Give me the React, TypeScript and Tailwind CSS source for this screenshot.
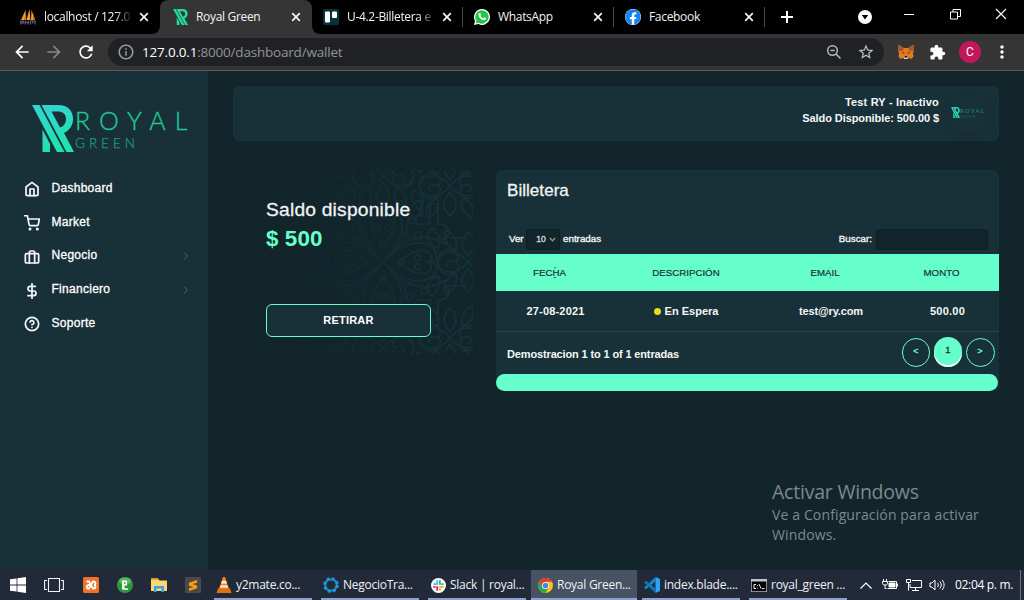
import type { ReactNode } from "react";
import { FiHome, FiShoppingCart, FiBriefcase, FiDollarSign, FiHelpCircle, FiChevronRight } from "react-icons/fi";
import { MdArrowBack, MdArrowForward, MdRefresh, MdInfoOutline, MdExtension, MdMoreVert, MdStarOutline } from "react-icons/md";
import { FaFacebook } from "react-icons/fa";

/* ---------- brand ---------- */

function BrandMark({ className, flat = false }: { className: string; flat?: boolean }) {
  const id = flat ? "markFlat" : "markGrad";
  return (
    <svg viewBox="0 0 42 47" className={className} fill={`url(#${id})`} preserveAspectRatio="none">
      <defs>
        <linearGradient id={id} x1="0" y1="0" x2="0.2" y2="1">
          <stop offset="0" stopColor={flat ? "#1fdf9c" : "#36d3d3"} />
          <stop offset="1" stopColor={flat ? "#1fdf9c" : "#1fe3ac"} />
        </linearGradient>
      </defs>
      <path d="M0 0h7.500L32.500 47h-7.500z" />
      <path d="M10.500 24.500L18 39v8h-7.500z" />
      <path
        d="M9.500 0H26c10 0 15 6 15 14 0 6-3 11-9 14l10 19h-7.500z M19.500 6.500l8.500 16c4-1 6-5 6-8.500 0-5-3-7.500-8.500-7.500z"
        fillRule="evenodd"
      />
    </svg>
  );
}

function Wordmark({ className }: { className: string }) {
  return (
    <span className={`flex flex-col font-['Lato','Liberation_Sans',sans-serif] font-light ${className}`}>
      <span className="text-[25px] leading-[30px] tracking-[9px] text-[#22c993] [-webkit-text-stroke:0.300px_#22c993]">ROYAL</span>
      <span className="text-[13.500px] leading-[17px] tracking-[4px] text-[#209c7c] [-webkit-text-stroke:0.250px_#209c7c]">GREEN</span>
    </span>
  );
}

/* ---------- browser ---------- */

const Close = () => (
  <svg viewBox="0 0 10 10" className="size-[10px] shrink-0" stroke="#f4f4f4" strokeWidth="1.7">
    <path d="M1.200 1.200l7.600 7.600M8.800 1.200L1.200 8.800" />
  </svg>
);

function TabBody({ icon, title, fade = false }: { icon: ReactNode; title: string; fade?: boolean }) {
  return (
    <>
      <span className="flex size-4 shrink-0 items-center justify-center">{icon}</span>
      <span
        className={`ml-2 w-[87px] shrink-0 text-[12px] leading-4 tracking-[-0.320px] whitespace-nowrap text-[#f3f3f3] ${
          fade ? "[mask-image:linear-gradient(to_right,#000_82%,transparent_102%)]" : ""
        }`}
      >
        {title}
      </span>
      <span className="ml-2 flex shrink-0">
        <Close />
      </span>
    </>
  );
}

const PmaIcon = () => (
  <svg viewBox="0 0 16 16" className="size-4">
    <path d="M5.500 1L1 11h5zM9.500 0L6.500 11h4zM11.500 1l3.500 10h-4z" fill="#f29a2e" />
    <path d="M6 4L4 11h2.500zM13 4l2 7h-2z" fill="#c66f14" />
    <path d="M.8 15.500V12h2.500v2H.8M5.200 15.500v-4M8.300 15.500v-4M5.200 13.500h3M10.500 15.500V12H15v3.500M12.700 12v2.500" fill="none" stroke="#62658a" strokeWidth="1.200" />
  </svg>
);

const TrelloIcon = () => (
  <svg viewBox="0 0 16 16" className="size-4">
    <rect width="16" height="16" rx="1.500" fill="#06303a" />
    <rect x="2" y="2.500" width="5" height="11" rx="1" fill="#fff" />
    <rect x="9" y="2.500" width="5" height="6.500" rx="1" fill="#fff" />
  </svg>
);

const WhatsIcon = () => (
  <svg viewBox="0 0 16 16" className="size-4">
    <path d="M8 0a8 8 0 11-3.700 15.100L0 16l1-4.100A8 8 0 018 0z" fill="#fff" />
    <path d="M8 1.200a6.700 6.700 0 11-3.400 12.500L1.800 14.400l.7-2.700A6.700 6.700 0 018 1.200z" fill="#1fc648" />
    <path d="M5.300 4.200c.8-.6 1.200 0 1.700 1.400.1.500-.5.800-.6 1.100.7 1.300 1.500 2 2.800 2.500.5-.2.700-1 1.100-.9 1.900.8 1.900.9 1.600 1.700-.5 1.200-1.900 1.300-3.100.9C6.500 10.100 5.200 8.700 4.600 7c-.4-1.100 0-2.200.7-2.800z" fill="#fff" />
  </svg>
);

function TabStrip() {
  return (
    <div className="flex h-[34px] shrink-0 bg-black">
      <div className="ml-2 flex w-[152px] items-center pl-3">
        <TabBody icon={<PmaIcon />} title="localhost / 127.0" fade />
      </div>
      <div className="relative flex w-[152px] items-center rounded-t-[8px] bg-[#353535] pl-3">
        <svg viewBox="0 0 8 8" className="absolute bottom-0 -left-2 size-2" fill="#353535">
          <path d="M8 0v8H0a8 8 0 008-8z" />
        </svg>
        <svg viewBox="0 0 8 8" className="absolute -right-2 bottom-0 size-2" fill="#353535">
          <path d="M0 0v8h8a8 8 0 01-8-8z" />
        </svg>
        <TabBody icon={<BrandMark flat className="h-4 w-[15px]" />} title="Royal Green" />
      </div>
      <div className="flex w-[150px] items-center pl-[11px]">
        <TabBody icon={<TrelloIcon />} title="U-4.2-Billetera e" fade />
      </div>
      <div className="flex w-[151px] items-center">
        <span className="mr-[11px] h-5 w-px bg-[#4a4a4a]" />
        <TabBody icon={<WhatsIcon />} title="WhatsApp" />
      </div>
      <div className="flex w-[151px] items-center">
        <span className="mr-[11px] h-5 w-px bg-[#4a4a4a]" />
        <TabBody icon={<FaFacebook className="size-4 rounded-full bg-white text-[#1583f3]" />} title="Facebook" />
      </div>
      <div className="flex items-center">
        <span className="h-5 w-px bg-[#4a4a4a]" />
        <svg viewBox="0 0 12 12" className="ml-4 size-3" stroke="#fff" strokeWidth="2">
          <path d="M6 0v12M0 6h12" />
        </svg>
      </div>
      <div className="ml-auto flex w-[182px] shrink-0 items-center justify-between pr-[17px] pl-4">
        <svg viewBox="0 0 14 14" className="size-[14px]">
          <circle cx="7" cy="7" r="7" fill="#fff" />
          <path d="M3.800 5h6.400L7 9.500z" fill="#000" />
        </svg>
        <svg viewBox="0 0 10 10" className="mb-[8px] ml-[7px] size-[10px]" stroke="#fff">
          <path d="M0 6.500h10" />
        </svg>
        <svg viewBox="0 0 11 11" className="mb-[5px] ml-[10px] size-[11px]" stroke="#fff" fill="none">
          <path d="M.5 3h7v7h-7zM3 3V.5h7.500v7H8" />
        </svg>
        <svg viewBox="0 0 12 12" className="mb-[6px] ml-[9px] size-3" stroke="#fff" strokeWidth="1.100">
          <path d="M1 1l10 10M11 1L1 11" />
        </svg>
      </div>
    </div>
  );
}

const Fox = () => (
  <svg viewBox="0 0 16 16" className="size-4">
    <path d="M.5.500L5.500 4h5L15.500.5l.3 6-.8 3 .5 3-2 2.500-3-1-1.500 1H7l-1.500-1-3 1-2-2.500.5-3-.8-3z" fill="#e07a20" />
    <path d="M.5.500L5.500 4 5 7 .4 7zM15.500.500L10.500 4l.5 3 4.600 0z" fill="#a35a22" />
    <path d="M3.500 8.500L6 8l.5 2zM12.500 8.500L10 8l-.5 2z" fill="#5b3a26" />
    <path d="M5.500 12.500h5l-.7 2.500H6.200z" fill="#d8c9bd" />
    <path d="M6.700 12h2.600l.2 1.500h-3z" fill="#1c1c1c" />
  </svg>
);

function Toolbar() {
  return (
    <div className="flex h-[37px] shrink-0 items-center border-b border-[#5a5a5a] bg-[#353535]">
      <MdArrowBack className="ml-3 size-5 text-white" />
      <MdArrowForward className="ml-3 size-5 text-[#858585]" />
      <MdRefresh className="ml-3 size-5 text-white" />
      <div className="ml-3 flex h-7 w-[776px] items-center rounded-full bg-[#202124] px-[9px]">
        <MdInfoOutline className="size-[18px] text-[#9a9ca0]" />
        <span className="ml-[7px] text-[13.500px] leading-5 tracking-[-0.200px] whitespace-nowrap text-[#929497]">
          <span className="text-white">127.0.0.1</span>:8000/dashboard/wallet
        </span>
        <svg viewBox="0 0 16 16" className="ml-auto size-4" fill="none" stroke="#b4b6b9" strokeWidth="1.500">
          <circle cx="6.500" cy="6.500" r="4.800" />
          <path d="M10 10l4.500 4.500M4.300 6.500h4.400" />
        </svg>
        <MdStarOutline className="ml-[15px] size-[18px] text-[#c0c2c5]" />
      </div>
      <span className="ml-[14px]">
        <Fox />
      </span>
      <MdExtension className="ml-[15px] size-[17px] text-white" />
      <span className="ml-[13px] flex size-[22px] items-center justify-center rounded-full bg-[#c2185b] font-['Roboto',sans-serif] text-[12px] text-white">
        C
      </span>
      <MdMoreVert className="ml-[11px] size-5 text-white" />
    </div>
  );
}

/* ---------- dashboard ---------- */

const NAV = [
  { label: "Dashboard", Icon: FiHome, more: false },
  { label: "Market", Icon: FiShoppingCart, more: false },
  { label: "Negocio", Icon: FiBriefcase, more: true },
  { label: "Financiero", Icon: FiDollarSign, more: true },
  { label: "Soporte", Icon: FiHelpCircle, more: false },
];

function Sidebar() {
  return (
    <aside className="flex w-[208px] shrink-0 flex-col bg-[#183138]">
      <div className="flex h-[100px] pt-[34px] pl-8">
        <BrandMark className="h-[47px] w-[42px]" />
        <Wordmark className="ml-[1px]" />
      </div>
      <nav className="flex flex-col">
        {NAV.map(({ label, Icon, more }) => (
          <div key={label} className="flex h-[33.750px] items-center pr-4 pl-6">
            <Icon strokeWidth={2.600} className="mt-[3px] size-4 text-[#f4f6f6]" />
            <span className="ml-[11.500px] text-[12px] leading-4 tracking-[0.280px] text-white [-webkit-text-stroke:0.300px_#fff]">{label}</span>
            {more && <FiChevronRight className="mt-[2px] ml-auto size-3 text-[#56656a]" />}
          </div>
        ))}
      </nav>
    </aside>
  );
}

function Header() {
  return (
    <header className="flex h-[55px] items-start justify-end rounded-[6px] bg-[#183138] pr-[11px]">
      <div className="mt-2 text-right text-[11px] leading-4 font-bold text-[#f4f6f6]">
        <div className="tracking-[0.180px]">Test RY - Inactivo</div>
        <div className="tracking-[-0.080px]">Saldo Disponible: 500.00 $</div>
      </div>
      <div className="mt-[7px] ml-[9px] flex size-10 items-center overflow-hidden rounded-full pl-[3px] shadow-[0_3px_6px_rgba(0,0,0,0.12)]">
        <BrandMark className="mb-[1px] h-[11px] w-[9px]" />
        <span className="flex flex-col font-['Lato',sans-serif]">
          <span className="text-[6px] leading-[7px] tracking-[1.300px] text-[#1f8f77]">ROYAL</span>
          <span className="text-[4px] leading-[5px] tracking-[0.600px] text-[#1f5f5a]">GREEN</span>
        </span>
      </div>
    </header>
  );
}

function Heart({ angle }: { angle: number }) {
  return (
    <g transform={`rotate(${angle} 93 92)`}>
      <path d="M93 92c14-14 30-22 42-18 14 4 14 18 5 18 9 0 9 14-5 18-12 4-28-4-42-18z" />
      <path d="M109 92c10-9 20-13 27-11 8 3 6 11 1 11 5 0 7 8-1 11-7 2-17-2-27-11z" />
      <path d="M131 86c-5-4-9 2-5 4 3 1 5-1 4-3M131 98c-5 4-9-2-5-4 3-1 5 1 4 3" />
      <circle cx="111" cy="92" r="3" />
      <path d="M148 66l6 4M128 62a4 4 0 10.100 0M112 62l8 8M122 48a3 3 0 10.100 0" />
      <path d="M93 92c20-24 42-32 62-18M93 92c20 24 42 32 62 18" />
    </g>
  );
}

function Swirls({ x, y }: { x: number; y: number }) {
  return (
    <g transform={`translate(${x} ${y})`}>
      <path d="M0 0c-16-20-38-6-28 8 9 11 24 0 16-8-6-5-13 3-7 6M0 0c16-20 38-6 28 8-9 11-24 0-16-8 6-5 13 3 7 6" />
      <path d="M0 0c-16 20-38 6-28-8 9-11 24 0 16 8M0 0c16 20 38 6 28-8-9-11-24 0-16 8" />
      <path d="M0 6c-8 10-8 16 0 24 8-8 8-14 0-24zM0-6c-8-10-8-16 0-24 8 8 8 14 0 24z" />
      <path d="M12 12c-2 10 2 16 10 20 4-10 0-16-10-20zM-12 12c2 10-2 16-10 20-4-10 0-16 10-20zM12-12c-2-10 2-16 10-20 4 10 0 16-10 20zM-12-12c2-10-2-16-10-20-4 10 0 16 10 20z" />
      <path d="M30 14c-4 8 0 14 6 20 8-8 4-16-6-20zM-30 14c4 8 0 14-6 20-8-8-4-16 6-20zM30-14c-4-8 0-14 6-20 8 8 4 16-6 20zM-30-14c4-8 0-14-6-20-8 8-4 16 6 20z" />
    </g>
  );
}

function Ornament() {
  return (
    <svg
      viewBox="0 0 183 184"
      className="absolute top-0 right-0 h-[184px] w-[183px] [mask-image:linear-gradient(to_right,transparent_5%,#000_80%)]"
      fill="none"
      stroke="#153337"
      strokeWidth="1.700"
    >
      {[0, 90, 180, 270].map((a) => (
        <Heart key={a} angle={a} />
      ))}
      <Swirls x={93} y={6} />
      <Swirls x={93} y={178} />
      <Swirls x={178} y={92} />
      <Swirls x={8} y={92} />
      <Swirls x={160} y={16} />
      <Swirls x={160} y={168} />
      <Swirls x={26} y={16} />
      <Swirls x={26} y={168} />
      <path d="M132 30v16h-6v8h14v-20h8v20c10 0 14 8 8 14h22M132 154v-16h-6v-8h14v20h8v-20c10 0 14-8 8-14h22" />
    </svg>
  );
}

function Balance() {
  return (
    <section className="relative h-[184px] w-[240px] shrink-0 overflow-hidden pt-[28px] pl-[33px]">
      <Ornament />
      <div className="relative">
        <div className="text-[19.200px] leading-[24px] tracking-[0.220px] whitespace-nowrap text-[#f1f3f3] [-webkit-text-stroke:0.300px_#f1f3f3]">Saldo disponible</div>
        <div className="mt-[3px] text-[22.400px] leading-[28px] font-bold tracking-[0.100px] text-[#66ffcc]">$ 500</div>
        <button className="mt-[51px] flex h-[33px] w-[165px] items-center justify-center rounded-[6px] border border-[#66ffcc] bg-[#183138] text-[11px] font-bold tracking-[0.200px] text-white">
          RETIRAR
        </button>
      </div>
    </section>
  );
}

function SortArrows({ strong }: { strong: boolean }) {
  return (
    <svg viewBox="0 0 6 12" className={`absolute top-0 left-[calc(50%+2px)] h-3 w-[6px] ${strong ? "opacity-100" : "opacity-40"}`} fill="#1f5f57">
      <path d="M3 0l1.200 1.200H1.800zM3 11.500L1.500 10h3z" />
    </svg>
  );
}

function Wallet() {
  const cols = ["w-[107px]", "w-[166px]", "w-[112px]", "w-[121px]"];
  return (
    <section className="flex h-[221px] w-[503px] shrink-0 flex-col rounded-[7px] bg-[#183138]">
      <h2 className="mt-[9px] ml-[11px] text-[17px] leading-6 tracking-[0.050px] text-[#f1f3f3] [-webkit-text-stroke:0.300px_#f1f3f3]">Billetera</h2>
      <div className="mt-[26px] flex h-[21px] items-center pr-[11px] pl-[13px] text-[9.800px] text-[#f1f3f3] [-webkit-text-stroke:0.350px_#f1f3f3]">
        <span className="w-[17px] tracking-[-0.100px]">Ver</span>
        <span className="flex h-[21px] w-[34px] items-center justify-center gap-[3px] rounded-[3px] border border-[#0e2025] bg-[#11252b] pb-px pl-[6px] text-[8.600px] text-[#c5cccd] [-webkit-text-stroke:0.400px_#c5cccd]">
          10
          <svg viewBox="0 0 8 5" className="mt-px size-[7px]" fill="none" stroke="#8c979a" strokeWidth="1.600">
            <path d="M1 .8l3 3 3-3" />
          </svg>
        </span>
        <span className="ml-[3px]">entradas</span>
        <span className="ml-auto">Buscar:</span>
        <span className="ml-1 h-[21px] w-[112px] rounded-[3px] border border-[#0e2025] bg-[#11252b]" />
      </div>
      <div className="mt-1 flex h-[37px] shrink-0 items-center bg-[#66ffcc] text-center text-[9.700px] leading-[11px] text-[#183138] [-webkit-text-stroke:0.200px_#183138]">
        {["FECHA", "DESCRIPCIÓN", "EMAIL", "MONTO"].map((h, i) => (
          <span key={h} className={`relative shrink-0 ${cols[i]}`}>
            {h}
            <SortArrows strong={i === 0} />
          </span>
        ))}
      </div>
      <div className="flex h-[41px] shrink-0 items-center border-b border-[#27454a] text-center text-[11px] leading-4 font-bold text-[#f4f6f6]">
        <span className="w-[119px] tracking-[0.180px]">27-08-2021</span>
        <span className="flex w-[142px] items-center justify-center gap-[4px]">
          <span className="size-[7px] rounded-full bg-[#e6dc1f]" />
          En Espera
        </span>
        <span className="w-[148px] tracking-[-0.150px]">test@ry.com</span>
        <span className="w-[85px] tracking-[0.250px]">500.00</span>
      </div>
      <div className="flex h-[42px] shrink-0 pr-[4px] pl-[11px]">
        <span className="mt-[14px] text-[11px] leading-4 font-bold tracking-[-0.140px] whitespace-nowrap text-[#f4f6f6]">
          Demostracion 1 to 1 of 1 entradas
        </span>
        <div className="mt-[5px] ml-auto flex gap-1 text-[9px] font-bold text-[#66ffcc]">
          <span className="mt-px flex h-[29px] w-[28px] items-center justify-center rounded-full border border-[#66ffcc] pb-px">&lt;</span>
          <span className="flex h-[30px] w-7 items-start justify-center rounded-full bg-[#66ffcc] pt-[7px] text-[9.500px] leading-[12px] font-normal text-[#183138] shadow-[inset_0_-2px_0_#f4fffb] [-webkit-text-stroke:0.300px_#183138]">
            1
          </span>
          <span className="mt-px flex h-[29px] w-[29px] items-center justify-center rounded-full border border-[#66ffcc] pr-px pb-px">&gt;</span>
        </div>
      </div>
      <div className="mr-px h-[17px] shrink-0 rounded-full bg-[#66ffcc]" />
    </section>
  );
}

/* ---------- taskbar ---------- */

const WinLogo = () => (
  <svg viewBox="0 0 16 16" className="size-4" fill="#fff">
    <path d="M0 2.300l6.600-.9v6.200H0zM7.400 1.300L16 .1v7.500H7.400zM0 8.400h6.600v6.200L0 13.700zM7.400 8.400H16v7.500l-8.600-1.200z" />
  </svg>
);

const TaskView = () => (
  <svg viewBox="0 0 20 14" className="h-[14px] w-5" fill="none" stroke="#f2f2f2" strokeWidth="1.100">
    <path d="M4.500.5h11v13h-11zM3 2.500H.6v9H3M17 2.500h2.400v9H17" />
  </svg>
);

const Xampp = () => (
  <svg viewBox="0 0 16 16" className="size-4">
    <rect width="16" height="16" rx="1.500" fill="#ef7226" />
    <path
      d="M3.500 4.500H6L10 11.500h1.200a1.800 1.800 0 000-3.500 1.800 1.800 0 000-3.500H10L6 11.500H5A1.800 1.800 0 015 8h2"
      fill="none"
      stroke="#fff"
      strokeWidth="1.800"
    />
  </svg>
);

const GreenOrb = () => (
  <svg viewBox="0 0 16 16" className="size-4">
    <circle cx="8" cy="8" r="8" fill="#2b9a3c" />
    <ellipse cx="8" cy="4" rx="6" ry="3.500" fill="#7ccb80" opacity=".6" />
    <path d="M5 3.500h5v5H7.500v2.500l3.500.5v1.500L5 12.500z" fill="#f1fff1" />
    <path d="M7 5.200h1.500v1.600H7z" fill="#2b9a3c" />
  </svg>
);

const Folder = () => (
  <svg viewBox="0 0 16 16" className="size-4">
    <path d="M0 1.500h7L8.500 3.500H16V14H0z" fill="#fbd774" />
    <path d="M0 1.500h7l1 1.500H0z" fill="#e5a932" />
    <path d="M3 9h10v6h-2.500v-3.500h-5V15H3z" fill="#35a5e4" />
  </svg>
);

const Sublime = () => (
  <svg viewBox="0 0 16 16" className="size-4">
    <rect width="16" height="16" rx="1" fill="#4a4a4b" />
    <path d="M12 3L4 5.700v3l4.500 1.400L4 11.300V14l8-2.700V8.500L7.500 7 12 5.700z" fill="#ff9a0c" />
  </svg>
);

const Vlc = () => (
  <svg viewBox="0 0 16 16" className="size-4">
    <path d="M7 0h2l4 12H3z" fill="#f58a1d" />
    <path d="M5.900 4h4.200l.9 2.500H5zM4.400 8.500h7.200l.7 2H3.700z" fill="#f1f1f1" />
    <path d="M2 11.500h12l1.500 4.500H.5z" fill="#e3700e" />
  </svg>
);

const Ring = () => (
  <svg viewBox="0 0 16 16" className="size-4" fill="none">
    <circle cx="8" cy="8" r="5.700" stroke="#1b9ad6" strokeWidth="1.800" />
    <circle cx="8" cy="8" r="6.300" stroke="#1b9ad6" strokeWidth="3" strokeDasharray="2.800 2.150" />
  </svg>
);

const Slack = () => (
  <svg viewBox="0 0 16 16" className="size-[15px]">
    <circle cx="8" cy="8" r="8" fill="#fff" />
    <g strokeWidth="2" strokeLinecap="round">
      <path d="M6.600 3.200v3.200M3.200 6.500h3" stroke="#36c5f0" />
      <path d="M9.500 3.200v3.200M12.700 6.500h-1" stroke="#2eb67d" />
      <path d="M9.500 9.500h3.200M9.500 12.700v-1" stroke="#ecb22e" />
      <path d="M3.200 9.500h1M6.600 9.500v3.200" stroke="#e01e5a" />
    </g>
  </svg>
);

const Chrome = () => (
  <svg viewBox="0 0 16 16" className="size-[15px]">
    <circle cx="8" cy="8" r="8" fill="#fbc116" />
    <path d="M8 8L1.070 4A8 8 0 0114.930 4H8z" fill="#e33b2e" />
    <path d="M1.070 4A8 8 0 008 16l3.460-6L8 8z" fill="#2da94f" />
    <path d="M1.070 4L8 4v0a4 4 0 00-3.700 2.500L3 7.300z" fill="#e33b2e" />
    <circle cx="8" cy="8" r="3.800" fill="#fff" />
    <circle cx="8" cy="8" r="3" fill="#4484f0" />
  </svg>
);

const VsCode = () => (
  <svg viewBox="0 0 16 16" className="size-4">
    <path d="M11.500 0L16 2v12l-4.500 2z" fill="#2aa5f4" />
    <path d="M11.500 0v4.500L2 12.200.4 11v-.8z" fill="#1386d2" />
    <path d="M11.500 16v-4.500L2 3.800.4 5v.8z" fill="#0f76bd" />
  </svg>
);

const Cmd = () => (
  <svg viewBox="0 0 16 13" className="h-[13px] w-4">
    <rect width="16" height="13" fill="#bfc4c8" />
    <rect x=".7" y="2.500" width="14.600" height="9.800" fill="#050505" />
    <path d="M5 5.500H3v4h2M6.500 6v.8M6.500 8.700v.8M8 5l2 4.500M11 9.500h2.500" stroke="#eee" fill="none" />
  </svg>
);

const TASKS = [
  { title: "y2mate.co...", icon: <Vlc />, active: false },
  { title: "NegocioTra...", icon: <Ring />, active: false },
  { title: "Slack | royal...", icon: <Slack />, active: false },
  { title: "Royal Green...", icon: <Chrome />, active: true },
  { title: "index.blade....", icon: <VsCode />, active: false },
  { title: "royal_green ...", icon: <Cmd />, active: false },
];

function Taskbar() {
  return (
    <div className="flex h-[30px] shrink-0 items-stretch bg-[#222938]">
      <div className="flex w-[209px] shrink-0 items-center pl-[10px]">
        <WinLogo />
        <span className="ml-[18px] flex">
          <TaskView />
        </span>
        <span className="ml-[19px] flex gap-[18px]">
          <Xampp />
          <GreenOrb />
          <Folder />
          <Sublime />
        </span>
      </div>
      {TASKS.map((t) => (
        <div key={t.title} className={`flex w-[107px] shrink-0 flex-col ${t.active ? "pl-px" : "pr-[4px] pl-[5px]"}`}>
          <div className={`flex flex-1 items-center pt-[2px] ${t.active ? "bg-[#475263] pl-[6px]" : "pl-[2px]"}`}>
            <span className="flex size-4 shrink-0 items-center justify-center">{t.icon}</span>
            <span className="ml-1 text-[12px] leading-4 tracking-[-0.260px] whitespace-nowrap text-[#f0f1f3]">{t.title}</span>
          </div>
          <div className="h-[2px] bg-[#8ea2c9]" />
        </div>
      ))}
      <div className="flex flex-1 items-center pl-[9px]">
        <svg viewBox="0 0 12 7" className="h-[7px] w-3" fill="none" stroke="#fff" strokeWidth="1.200">
          <path d="M.5 6.500L6 1l5.500 5.500" />
        </svg>
        <svg viewBox="0 0 16 12" className="ml-[10px] h-3 w-4" fill="none" stroke="#fff">
          <path d="M6.500 2.500h8v7h-9M15.500 4.500v3M1.500 0v2.500M4.500 0v2.500M.5 2.500h5v2l-1 1.500h-3l-1-1.500zM3 6v3.500h1.500" />
          <path d="M7 4h6v4H7z" fill="#fff" />
        </svg>
        <svg viewBox="0 0 16 14" className="ml-2 h-[14px] w-4" fill="none" stroke="#fff">
          <path d="M6 2.500h9.500v7H4V6M9.500 9.500v3M6 12.500h7M.5 1.500h4v3h-4zM2.500 4.500v8" />
        </svg>
        <svg viewBox="0 0 17 14" className="ml-[7px] h-[14px] w-[17px]" fill="none" stroke="#fff">
          <path d="M1 5h2l3-3v10L3 9H1zM8.500 5c1 1 1 3 0 4M10.800 3.500c2 2 2 5 0 7M13.200 2c2.500 3 2.500 7 0 10" />
        </svg>
        <span className="ml-[9px] text-[12px] leading-4 tracking-[-0.320px] whitespace-nowrap text-white">02:04 p. m.</span>
        <span className="mr-[3px] ml-auto h-full w-px bg-[#70757f]" />
      </div>
    </div>
  );
}

export default function App() {
  return (
    <div className="relative flex h-[600px] w-[1024px] flex-col overflow-hidden bg-[#11252b] font-['Open_Sans','Noto_Sans',sans-serif]">
      <TabStrip />
      <Toolbar />
      <div className="flex min-h-0 flex-1 font-['Liberation_Sans',Arial,sans-serif]">
        <Sidebar />
        <main className="flex flex-1 flex-col pt-[15px] pr-[25px] pl-[25px]">
          <Header />
          <div className="mt-[29px] flex items-start justify-between">
            <Balance />
            <Wallet />
          </div>
        </main>
      </div>
      <Taskbar />
      <div className="absolute top-[479px] left-[772px] text-[#7f898c]">
        <div className="text-[19.500px] leading-[26px] tracking-[-0.220px] whitespace-nowrap">Activar Windows</div>
        <div className="text-[14px] leading-5 tracking-[0.130px] whitespace-nowrap">
          Ve a Configuración para activar
          <br />
          Windows.
        </div>
      </div>
    </div>
  );
}
